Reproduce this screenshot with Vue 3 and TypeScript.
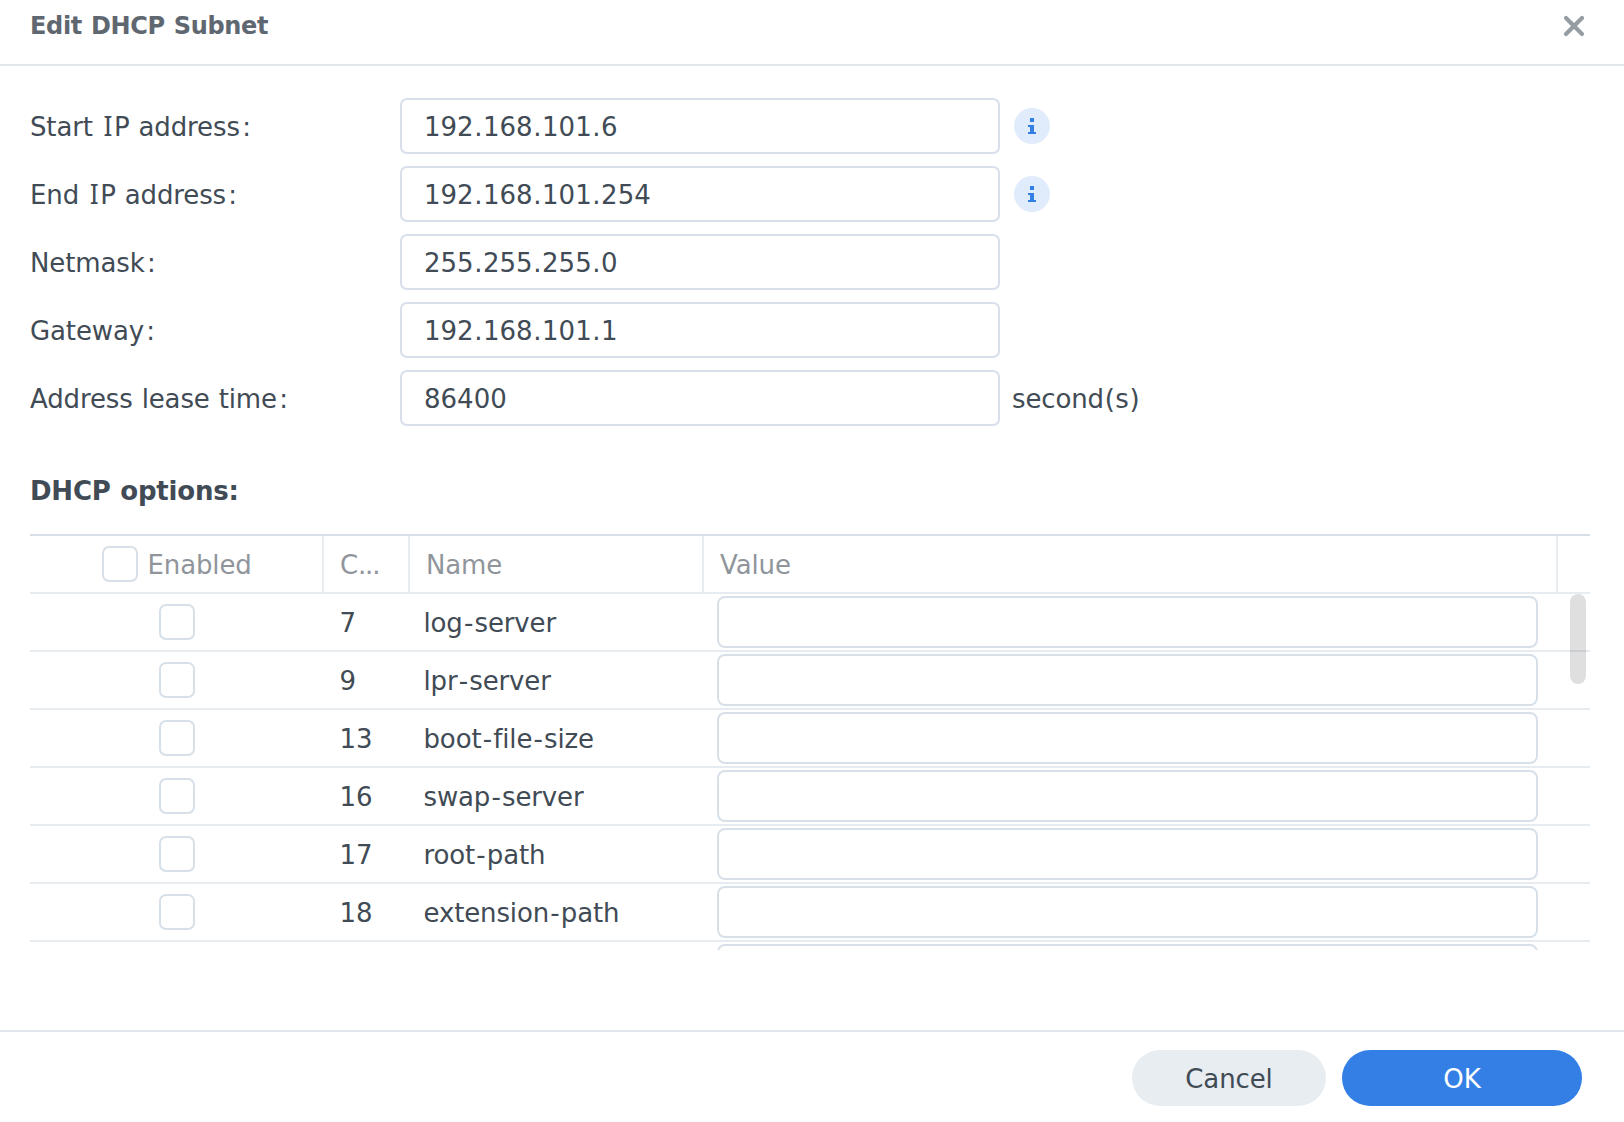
<script setup lang="ts">
import { h, ref, type FunctionalComponent } from 'vue'

interface Field {
  label: string
  value: string
  info?: boolean
  suffix?: string
}

interface DhcpOption {
  code: number
  name: string
  enabled: boolean
}

const fields = ref<Field[]>([
  { label: 'Start IP address:', value: '192.168.101.6', info: true },
  { label: 'End IP address:', value: '192.168.101.254', info: true },
  { label: 'Netmask:', value: '255.255.255.0' },
  { label: 'Gateway:', value: '192.168.101.1' },
  { label: 'Address lease time:', value: '86400', suffix: 'second(s)' },
])

const options = ref<DhcpOption[]>([
  { code: 7, name: 'log-server', enabled: false },
  { code: 9, name: 'lpr-server', enabled: false },
  { code: 13, name: 'boot-file-size', enabled: false },
  { code: 16, name: 'swap-server', enabled: false },
  { code: 17, name: 'root-path', enabled: false },
  { code: 18, name: 'extension-path', enabled: false },
])

// Gives punctuation and the capital I their wider setting.
const glyphClass: Record<string, string> = {
  I: 'g-i',
  '.': 'g-dot',
  ':': 'g-colon',
  '-': 'g-dash',
  '(': 'g-paren',
  ')': 'g-paren',
}

const Txt: FunctionalComponent<{ text: string }> = (props) =>
  h(
    'span',
    { class: 'txt' },
    props.text
      .split(/([I.:()-])/)
      .filter((part) => part !== '')
      .map((part) => (glyphClass[part] ? h('span', { class: glyphClass[part] }, part) : part)),
  )
Txt.props = ['text']
</script>

<template>
  <div class="dialog">
    <header class="head">
      <h1 class="title">Edit DHCP Subnet</h1>
      <button class="close" aria-label="Close">
        <svg width="22" height="22" viewBox="0 0 22 22">
          <path d="M3 3 L19 19 M19 3 L3 19" stroke="#969da2" stroke-width="4.2" stroke-linecap="round" />
        </svg>
      </button>
    </header>

    <main class="body">
      <div class="form">
        <div v-for="f in fields" :key="f.label" class="row">
          <div class="label"><Txt :text="f.label" /></div>
          <div class="input num"><Txt :text="f.value" /></div>
          <svg v-if="f.info" class="info" width="36" height="36" viewBox="0 0 36 36">
            <circle cx="18" cy="18" r="18" fill="#e0ebfc" />
            <path d="M16 10h4v4h-4z M14 17h6v7h2v2h-8v-2h2v-5h-2z" fill="#347fe5" shape-rendering="crispEdges" />
          </svg>
          <div v-if="f.suffix" class="suffix"><Txt :text="f.suffix" /></div>
        </div>
      </div>

      <h2 class="section">DHCP options:</h2>

      <div class="grid">
        <div class="ghead">
          <div class="h-enabled"><span class="check"></span><span class="h-text">Enabled</span></div>
          <div class="h-code">C<span class="dots">...</span></div>
          <div class="h-name">Name</div>
          <div class="h-value">Value</div>
          <div class="h-rest"></div>
        </div>
        <div class="gbody">
          <div v-for="o in options" :key="o.code" class="grow">
            <div class="c-enabled"><span class="check"></span></div>
            <div class="c-code num">{{ o.code }}</div>
            <div class="c-name"><Txt :text="o.name" /></div>
            <div class="c-value"></div>
          </div>
          <div class="grow">
            <div class="c-enabled"></div>
            <div class="c-code"></div>
            <div class="c-name"></div>
            <div class="c-value"></div>
          </div>
          <div class="thumb"></div>
        </div>
      </div>
    </main>

    <footer class="foot">
      <button class="btn cancel">Cancel</button>
      <button class="btn ok">OK</button>
    </footer>
  </div>
</template>

<style>
body {
  background: #fff;
}
</style>

<style scoped>
* {
  box-sizing: border-box;
}
.dialog {
  width: 1624px;
  height: 1122px;
  display: flex;
  flex-direction: column;
  overflow: hidden;
  background: #fff;
  color: #414b55;
  font-family: Verdana, 'DejaVu Sans', sans-serif;
  font-size: 26px;
  line-height: 32px;
  letter-spacing: -0.005em;
  word-spacing: 0.034em;
  white-space: nowrap;
}
.num {
  letter-spacing: 0;
}
.txt {
  white-space: pre;
}
:deep(.g-i) {
  font-family: 'Noto Sans', sans-serif;
  font-size: 26.4px;
  line-height: 0;
  margin-left: 0.06em;
  margin-right: 0.065em;
}
:deep(.g-dot) {
  margin: 0 0.022em;
}
:deep(.g-colon) {
  margin-left: 0.09em;
}
:deep(.g-dash) {
  margin: 0 0.048em;
}
:deep(.g-paren) {
  margin: 0 0.026em;
}
.head {
  flex: none;
  height: 66px;
  display: flex;
  justify-content: space-between;
  border-bottom: 2px solid #e2e7ec;
  padding: 10px 39px 0 30px;
}
.title {
  margin: 0;
  font-size: 24px;
  line-height: 32px;
  font-weight: 700;
  letter-spacing: -0.32px;
  color: #5f6770;
}
button {
  border: 0;
  padding: 0;
  margin: 0;
  background: none;
  font: inherit;
  letter-spacing: inherit;
  color: inherit;
}
.close {
  width: 22px;
  height: 22px;
  margin-top: 5px;
}
.close svg {
  display: block;
}
.body {
  flex: 1;
  min-height: 0;
  padding: 32px 34px 0 30px;
}
.form {
  display: flex;
  flex-direction: column;
  gap: 12px;
}
.row {
  height: 56px;
  display: flex;
  align-items: center;
}
.label {
  width: 370px;
  padding-top: 1px;
}
.input {
  width: 600px;
  height: 56px;
  border: 2px solid #d7e0e9;
  border-radius: 7px;
  padding: 11px 22px 0;
}
.info {
  margin: 0 0 0 14px;
}
.suffix {
  padding: 1px 0 0 12px;
}
.section {
  margin: 49px 0 0;
  height: 32px;
  font-size: 26px;
  line-height: 32px;
  font-weight: 700;
  letter-spacing: -0.22px;
}
.grid {
  margin-top: 27px;
  border-top: 2px solid #d7e0e9;
}
.ghead {
  height: 58px;
  display: flex;
  border-bottom: 2px solid #e7ecf1;
  color: #8f959b;
  line-height: 58px;
}
.ghead > div {
  height: 56px;
  border-right: 2px solid #e7ecf1;
  padding-left: 16px;
}
.ghead > .h-rest {
  border: 0;
}
.ghead > .h-enabled {
  width: 294px;
  display: flex;
  align-items: center;
  padding-left: 72px;
}
.h-text {
  margin-left: 9.5px;
  padding-top: 2px;
}
.h-code {
  width: 86px;
}
.dots {
  letter-spacing: -1.2px;
}
.h-name {
  width: 294px;
}
.h-value {
  width: 854px;
}
.check {
  display: block;
  flex: none;
  width: 36px;
  height: 36px;
  border: 2px solid #d7e0e9;
  border-radius: 7px;
}
.gbody {
  position: relative;
  height: 356px;
  overflow: hidden;
}
.grow {
  height: 58px;
  display: flex;
  border-bottom: 2px solid #e7ecf1;
  line-height: 58px;
}
.c-enabled {
  width: 309.5px;
  padding: 10px 0 0 129px;
}
.c-code {
  width: 84px;
}
.c-name {
  width: 293.5px;
}
.c-value {
  width: 821px;
  height: 52px;
  margin-top: 2px;
  border: 2px solid #d7e0e9;
  border-radius: 8px;
}
.thumb {
  position: absolute;
  top: 0;
  right: 4px;
  width: 16px;
  height: 90px;
  border-radius: 8px;
  background: rgba(0, 0, 0, 0.125);
}
.foot {
  flex: none;
  height: 92px;
  border-top: 2px solid #e2e7ee;
  padding: 18px 42px 0 0;
  display: flex;
  justify-content: flex-end;
  gap: 16px;
}
.btn {
  height: 56px;
  border-radius: 28px;
  padding-top: 1px;
}
.cancel {
  width: 194px;
  background: #e8edf1;
}
.ok {
  width: 240px;
  background: #347fe5;
  color: #fff;
}
</style>
